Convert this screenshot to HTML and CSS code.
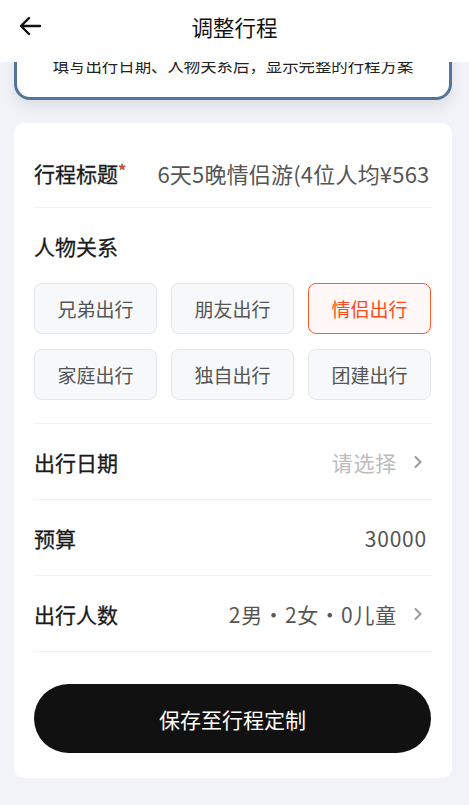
FILE: index.html
```html
<!DOCTYPE html>
<html lang="zh-CN">

<head>
    <meta charset="UTF-8">
    <meta name="viewport" content="width=device-width, initial-scale=1.0">
    <title>调整行程</title>
    <link rel="stylesheet" href="styles.css">
</head>

<body>
    <div class="nav-bar">
        <button class="back-button" type="button">
            <svg width="24" height="20" viewBox="0 0 24 20">
                <path d="M22 10H3M11 2L3 10l8 8" fill="none" stroke="#111" stroke-width="2.4" stroke-linecap="round" stroke-linejoin="round" />
            </svg>
        </button>
        <h1>调整行程</h1>
    </div>

    <div class="page">
        <div class="tip-card">
            <p>填写出行日期、人物关系后，显示完整的行程方案</p>
        </div>

        <div class="form-card">
            <div class="form-row title-row">
                <span class="label">行程标题<em>*</em></span>
                <span class="value title-value">6天5晚情侣游(4位人均¥563</span>
            </div>

            <div class="relation-section">
                <div class="label">人物关系</div>
                <div class="chip-grid">
                    <div class="chip">兄弟出行</div>
                    <div class="chip">朋友出行</div>
                    <div class="chip active">情侣出行</div>
                    <div class="chip">家庭出行</div>
                    <div class="chip">独自出行</div>
                    <div class="chip">团建出行</div>
                </div>
            </div>

            <div class="form-row">
                <span class="label">出行日期</span>
                <span class="value placeholder">请选择
                    <svg class="chevron" width="10" height="16" viewBox="0 0 10 16">
                        <path d="M2.5 3l5 5-5 5" fill="none" stroke="#9a9a9a" stroke-width="2" stroke-linecap="round" stroke-linejoin="round" />
                    </svg>
                </span>
            </div>

            <div class="form-row">
                <span class="label">预算</span>
                <span class="value plain">30000</span>
            </div>

            <div class="form-row">
                <span class="label">出行人数</span>
                <span class="value">2男・2女・0儿童
                    <svg class="chevron" width="10" height="16" viewBox="0 0 10 16">
                        <path d="M2.5 3l5 5-5 5" fill="none" stroke="#9a9a9a" stroke-width="2" stroke-linecap="round" stroke-linejoin="round" />
                    </svg>
                </span>
            </div>

            <button class="save-button" type="button">保存至行程定制</button>
        </div>
    </div>
</body>

</html>
```

FILE: styles.css
```css
* {
    box-sizing: border-box;
}

body {
    margin: 0;
    background: #f2f3f8;
    font-family: "Noto Sans CJK SC", "Noto Sans", sans-serif;
    color: #222;
}

.nav-bar {
    position: fixed;
    top: 0;
    left: 0;
    right: 0;
    z-index: 10;
    height: 62px;
    background: #fff;
    display: flex;
    align-items: center;
    justify-content: center;
}

.nav-bar h1 {
    margin: 0 0 9px;
    font-size: 21.5px;
    font-weight: 400;
    color: #111;
}

.back-button {
    position: absolute;
    left: 18px;
    top: 16px;
    padding: 0;
    border: none;
    background: none;
}

.page {
    padding: 20px 17px 28px 14px;
}

.tip-card {
    height: 80px;
    display: flex;
    align-items: flex-end;
    justify-content: center;
    padding-bottom: 21px;
    border: 3px solid #52769a;
    border-radius: 16px;
    background: #fff;
    box-shadow: 0 8px 14px rgba(0, 0, 0, 0.08);
}

.tip-card p {
    margin: 0;
    font-size: 16.4px;
    line-height: 22px;
    color: #222;
}

.form-card {
    margin-top: 23px;
    padding: 14px 20px 25px;
    background: #fff;
    border-radius: 10px;
}

.form-row {
    height: 76px;
    display: flex;
    align-items: center;
    justify-content: space-between;
    border-bottom: 1px solid #f1f2f5;
}

.title-row {
    height: 71px;
    padding-top: 1px;
}

.label {
    flex-shrink: 0;
    font-size: 21px;
    font-weight: 400;
    line-height: 28px;
    color: #1a1a1a;
    -webkit-text-stroke: 0.3px #1a1a1a;
}

.label em {
    font-style: normal;
    color: #f2532b;
    font-size: 18px;
    vertical-align: top;
    line-height: 22px;
}

.value {
    display: flex;
    align-items: center;
    gap: 16px;
    font-size: 21px;
    line-height: 28px;
    letter-spacing: 0.8px;
    color: #555;
    white-space: nowrap;
}

.value.plain {
    margin-right: 5px;
}

.title-value {
    margin-left: 31px;
    flex: 1;
    font-size: 22px;
    letter-spacing: 0.2px;
}

.placeholder {
    color: #bcbcbc;
}

.chevron {
    margin-right: 9px;
}

.relation-section {
    padding: 24px 0 23px;
    border-bottom: 1px solid #f1f2f5;
}

.chip-grid {
    margin-top: 23px;
    display: grid;
    grid-template-columns: repeat(3, 123px);
    gap: 15px 14px;
}

.chip {
    height: 51px;
    display: flex;
    align-items: center;
    justify-content: center;
    border: 1px solid #e4e6ec;
    border-radius: 8px;
    background: #f7f8fa;
    font-size: 19px;
    color: #555;
}

.chip.active {
    border: 1.5px solid #ff5a2c;
    background: #fff8f6;
    color: #ff4a1c;
}

.save-button {
    display: block;
    width: 397px;
    height: 69px;
    margin-top: 32px;
    border: none;
    border-radius: 35px;
    background: #111;
    color: #fff;
    font-family: inherit;
    font-size: 21px;
    font-weight: 400;
    cursor: pointer;
}
```
